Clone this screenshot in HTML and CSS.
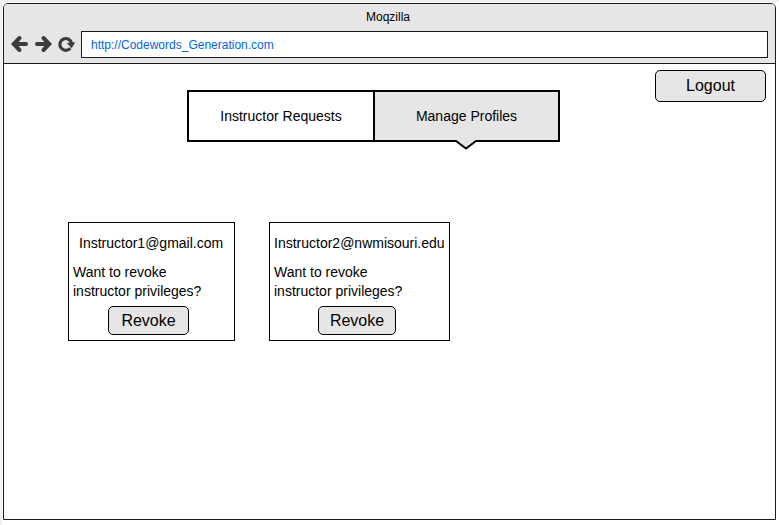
FILE: index.html
```html
<!DOCTYPE html>
<html lang="en">
<head>
<meta charset="utf-8">
<title>Moqzilla</title>
<link rel="stylesheet" href="styles.css">
</head>
<body>
<div class="window">
  <header class="chrome">
    <div class="title">Moqzilla</div>
    <div class="toolbar">
      <svg class="nav" width="70" height="20" viewBox="0 0 70 20" fill="none" stroke="#3c3c3c" stroke-width="4">
        <path d="M5 10H17" stroke-linecap="round"/>
        <path d="M10.5 4L4.8 10L10.5 16" stroke-linecap="round"/>
        <path d="M28 10H40" stroke-linecap="round"/>
        <path d="M34.5 4L40.2 10L34.5 16" stroke-linecap="round"/>
        <path d="M61.3 14.2A5.9 5.9 0 1 1 62.6 9.5" stroke-width="3.2"/>
        <path d="M57.8 9L66.3 8.3L62.6 14.2Z" fill="#3c3c3c" stroke="none"/>
      </svg>
      <div class="address">http://Codewords_Generation.com</div>
    </div>
  </header>
  <main class="page">
    <div class="actions"><button class="btn logout">Logout</button></div>
    <nav class="tabs">
      <div class="tab">Instructor Requests</div>
      <div class="tab active">Manage Profiles
        <svg class="pointer" width="22" height="10" viewBox="0 0 22 10"><path d="M1 0H21V1L11 8.5L1 1Z" fill="#e6e6e6"/><path d="M0 1H1L11 8.5L21 1H22" fill="none" stroke="#000" stroke-width="2"/></svg>
      </div>
    </nav>
    <section class="cards">
      <article class="card first">
        <div class="email">Instructor1@gmail.com</div>
        <p>Want to revoke<br>instructor privileges?</p>
        <button class="btn">Revoke</button>
      </article>
      <article class="card second">
        <div class="email">Instructor2@nwmisouri.edu</div>
        <p>Want to revoke<br>instructor privileges?</p>
        <button class="btn">Revoke</button>
      </article>
    </section>
  </main>
</div>
</body>
</html>
```
FILE: styles.css
```css
* { box-sizing: border-box; }
html { background: #fff; }
body {
  margin: 0;
  padding: 3px;
  height: 525px;
  box-shadow: inset 2px 2px #f0f0f0;
  font: 14px/19px "Liberation Sans", Arial, sans-serif;
  color: #000;
}
.window {
  width: 773px;
  height: 517px;
  border: 1px solid #1a1a1a;
  border-radius: 5px 5px 0 0;
  background: #fff;
}
.chrome {
  height: 60px;
  border-bottom: 1px solid #1a1a1a;
  border-radius: 4px 4px 0 0;
  background: #e6e6e6;
}
.title {
  height: 27px;
  line-height: 27px;
  font-size: 12px;
  text-align: center;
  padding-right: 3px;
}
.toolbar { display: flex; padding-left: 5px; }
.nav { margin: 3px 2px 0 0; overflow: visible; }
.address {
  width: 687px;
  height: 27px;
  padding-left: 9px;
  border: 1px solid #1a1a1a;
  background: #fff;
  color: #0066dd;
  font-size: 12px;
  line-height: 26px;
}
.btn {
  display: block;
  height: 29px;
  padding: 0;
  border: 1px solid #000;
  border-radius: 5px;
  background: #e6e6e6;
  color: #000;
  font: 16px/27px "Liberation Sans", Arial, sans-serif;
}
.actions { display: flex; justify-content: flex-end; padding: 6px 9px 0 0; height: 26px; }
.logout { width: 111px; height: 32px; line-height: 30px; }
.tabs {
  display: grid;
  grid-template-columns: 184px 185px;
  grid-template-rows: 48px;
  width: 373px;
  height: 52px;
  margin-left: 183px;
  border: 2px solid #000;
}
.tab { line-height: 49px; text-align: center; }
.active { position: relative; background: #e6e6e6; border-left: 2px solid #000; }
.pointer { position: absolute; left: 80px; top: 48px; }
.cards { display: flex; gap: 34px; padding: 80px 0 0 64px; align-items: flex-start; }
.card { height: 119px; border: 1px solid #000; padding: 11px 4px 0; }
.first { width: 167px; }
.second { width: 181px; }
.email { white-space: nowrap; }
.first .email { padding-left: 6px; }
.card p { margin: 10px 0 5px; }
.first .btn { width: 81px; margin-left: 35px; }
.second .btn { width: 78px; margin-left: 44px; }
```
